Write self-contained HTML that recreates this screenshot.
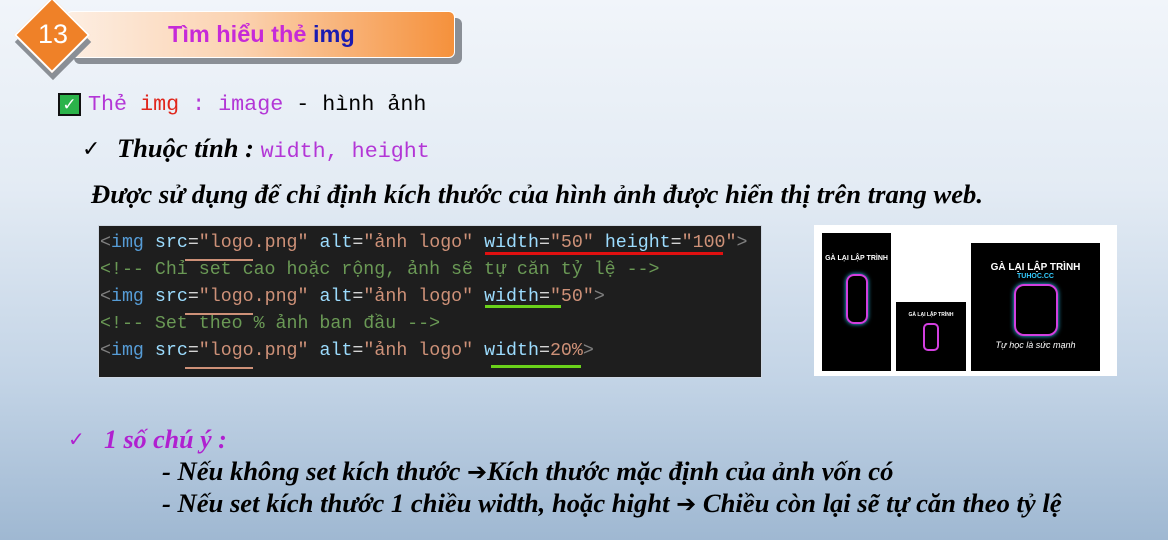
<!DOCTYPE html>
<html><head><meta charset="utf-8"><style>
*{margin:0;padding:0;box-sizing:border-box}
body{width:1168px;height:540px;overflow:hidden;position:relative;background:linear-gradient(180deg,#f1f5fa 0%,#e3ebf4 35%,#c3d4e6 70%,#9fb8d2 100%);font-family:"Liberation Sans",sans-serif}
.abs{position:absolute;white-space:nowrap}
.mono{font-family:"Liberation Mono",monospace}
.serif{font-family:"Liberation Serif",serif;font-style:italic;font-weight:bold}
.code{left:98px;top:225px;width:664px;height:153px;background:#1e1e1e;border:1px solid #cfd8e3;color:#d4d4d4}
.code div{position:absolute;left:1px;font-size:18.3px;white-space:nowrap;font-family:"Liberation Mono",monospace}
.t{color:#569cd6}.a{color:#9cdcfe}.s{color:#ce9178}.c{color:#6a9955}.g{color:#808080}
.img{background:#000;position:absolute;color:#fff;text-align:center;font-weight:bold}
.ar{font-family:"DejaVu Sans",sans-serif;font-style:normal;font-size:24px;font-weight:bold}
</style></head><body>
<div class="abs" style="left:74px;top:18px;width:388px;height:46px;background:#8a8f96;border-radius:6px"></div>
<div class="abs" style="left:66px;top:11px;width:389px;height:47px;border-radius:6px;background:linear-gradient(90deg,#fdeee2,#fbd2b0 45%,#f5913c);border:1px solid #fff"></div>
<div class="abs" style="left:168px;top:21px;font-size:23.5px;font-weight:bold;color:#c62ad8">Tìm hiểu thẻ <span style="color:#1a1ab0">img</span></div>
<div class="abs" style="left:26px;top:15px;width:54px;height:54px;transform:rotate(45deg);background:#8a8f96"></div>
<div class="abs" style="left:25px;top:8px;width:54px;height:54px;transform:rotate(45deg);background:#ef8128;border:2px solid #fff"></div>
<div class="abs" style="left:38px;top:19px;font-size:27px;color:#fff">13</div>

<div class="abs" style="left:58px;top:93px;width:23px;height:23px;background:#2bb34a;border:2px solid #111;color:#fff;font-size:17px;line-height:19px;text-align:center">✓</div>
<div class="abs mono" style="left:88px;top:92px;font-size:21.7px"><span style="color:#b336d6">Thẻ</span> <span style="color:#e0261c">img</span> <span style="color:#b336d6">: image</span> - hình ảnh</div>
<div class="abs" style="left:82px;top:136px;font-size:22px">✓</div>
<div class="abs serif" style="left:117px;top:133px;font-size:26.5px">Thuộc tính : <span class="mono" style="font-style:normal;font-weight:normal;color:#b336d6;font-size:21.7px">width, height</span></div>
<div class="abs serif" style="left:91px;top:179px;font-size:26.6px">Được sử dụng để chỉ định kích thước của hình ảnh được hiển thị trên trang web.</div>

<div class="abs code">
<div style="top:7px"><span class="g">&lt;</span><span class="t">img</span> <span class="a">src</span>=<span class="s">"logo.png"</span> <span class="a">alt</span>=<span class="s">"ảnh logo"</span> <span class="a">width</span>=<span class="s">"50"</span> <span class="a">height</span>=<span class="s">"100"</span><span class="g">&gt;</span></div>
<div style="top:34px" class="c">&lt;!-- Chỉ set cao hoặc rộng, ảnh sẽ tự căn tỷ lệ --&gt;</div>
<div style="top:61px"><span class="g">&lt;</span><span class="t">img</span> <span class="a">src</span>=<span class="s">"logo.png"</span> <span class="a">alt</span>=<span class="s">"ảnh logo"</span> <span class="a">width</span>=<span class="s">"50"</span><span class="g">&gt;</span></div>
<div style="top:88px" class="c">&lt;!-- Set theo % ảnh ban đầu --&gt;</div>
<div style="top:115px"><span class="g">&lt;</span><span class="t">img</span> <span class="a">src</span>=<span class="s">"logo.png"</span> <span class="a">alt</span>=<span class="s">"ảnh logo"</span> <span class="a">width</span>=<span class="s">20%</span><span class="g">&gt;</span></div>
</div>
<div class="abs" style="left:485px;top:252px;width:238px;height:3px;background:#e01010"></div>
<div class="abs" style="left:485px;top:305px;width:76px;height:3px;background:#6ad21a"></div>
<div class="abs" style="left:491px;top:365px;width:90px;height:3px;background:#6ad21a"></div>
<div class="abs" style="left:185px;top:259px;width:68px;height:2px;background:#ce9178"></div>
<div class="abs" style="left:185px;top:313px;width:68px;height:2px;background:#ce9178"></div>
<div class="abs" style="left:185px;top:367px;width:68px;height:2px;background:#ce9178"></div>

<div class="abs" style="left:814px;top:225px;width:303px;height:151px;background:#fff">
 <div class="img" style="left:8px;top:8px;width:69px;height:138px;font-size:7px;padding-top:22px">GÀ LẠI LẬP TRÌNH<div style="margin:12px auto;width:22px;height:50px;border:2px solid #d33fe0;border-radius:8px;box-shadow:0 0 4px #3cf"></div></div>
 <div class="img" style="left:82px;top:77px;width:70px;height:69px;font-size:5px;padding-top:10px">GÀ LẠI LẬP TRÌNH<div style="margin:5px auto;width:16px;height:28px;border:2px solid #d33fe0;border-radius:5px"></div></div>
 <div class="img" style="left:157px;top:18px;width:129px;height:128px;font-size:10px;padding-top:19px">GÀ LẠI LẬP TRÌNH<div style="color:#3cf;font-size:7px">TUHOC.CC</div><div style="margin:4px auto;width:44px;height:52px;border:2px solid #d33fe0;border-radius:10px;box-shadow:0 0 5px #3cf"></div><div style="font-size:9px;font-style:italic;font-weight:normal">Tự học là sức mạnh</div></div>
</div>

<div class="abs" style="left:68px;top:427px;font-size:20px;color:#b020d0">✓</div>
<div class="abs serif" style="left:104px;top:425px;font-size:26px;color:#b020d0">1 số chú ý :</div>
<div class="abs serif" style="left:162px;top:456px;font-size:26.6px">- Nếu không set kích thước <span class="ar">➔</span>Kích thước mặc định của ảnh vốn có</div>
<div class="abs serif" style="left:162px;top:488px;font-size:26.6px">- Nếu set kích thước 1 chiều width, hoặc hight <span class="ar">➔</span> Chiều còn lại sẽ tự căn theo tỷ lệ</div>
</body></html>
